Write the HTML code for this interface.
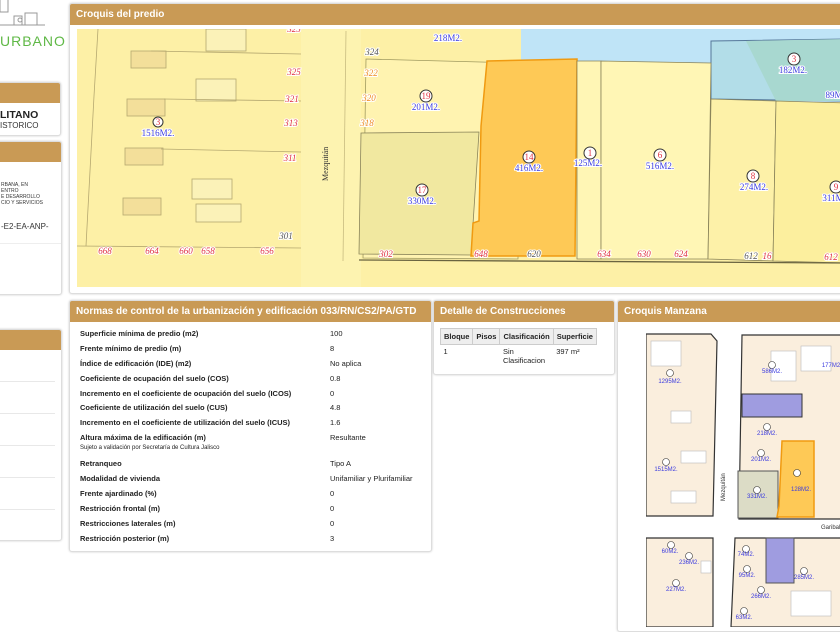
<!DOCTYPE html>
<html><head><meta charset="utf-8"><style>
body{margin:0;width:840px;height:630px;overflow:hidden;background:#fff;font-family:"Liberation Sans",sans-serif;position:relative}
.p{position:absolute;border:1px solid #ddd;border-radius:3px;background:#fff;box-shadow:0 0 2px #ccc;overflow:hidden}
.h{background:#c99a55;color:#fff;font-weight:bold;font-size:10px;height:21px;line-height:21px;padding-left:6px}
table.n{font-size:7.5px;border-collapse:collapse;margin:5px 0 0 10px;line-height:9px}
table.n td{padding:0;height:12.9px;vertical-align:top;padding-top:2px}
table.n td:first-child{font-weight:bold;width:250px;color:#222}
table.n td:last-child{color:#222}
.m text{font-family:"Liberation Serif",serif}
</style></head><body>

<!-- sidebar -->
<div style="position:absolute;left:0;top:0;width:62px;height:60px">
<svg width="62" height="32" style="position:absolute;top:0;left:0"><g fill="none" stroke="#999" stroke-width="1"><rect x="0" y="-2" width="8" height="14"/><rect x="14" y="16" width="8" height="9"/><rect x="25" y="13" width="12" height="12"/><line x1="0" y1="25" x2="45" y2="25"/><circle cx="20" cy="20" r="2"/></g></svg>
<div style="position:absolute;top:33px;left:0;color:#5fb846;font-size:14px;letter-spacing:1px">URBANO</div>
</div>
<div class="p" style="left:-4px;top:82px;width:64px;height:52px;border-left:none"><div class="h" style="height:20px"></div>
<div style="font-size:10.5px;font-weight:bold;color:#222;margin:6px 0 0 4px">LITANO</div><div style="font-size:8px;color:#333;margin-left:4px">ISTORICO</div></div>
<div class="p" style="left:-4px;top:141px;width:64px;height:152px"><div class="h" style="height:20px"></div>
<div style="font-size:5px;color:#333;margin:20px 0 0 4px;line-height:6px">RBANA, EN<br>ENTRO<br>E DESARROLLO<br>CIO Y SERVICIOS</div>
<div style="font-size:8px;color:#333;margin:16px 0 0 4px">-E2-EA-ANP-</div>
<div style="border-top:1px solid #eee;margin-top:12px"></div></div>
<div class="p" style="left:-4px;top:329px;width:64px;height:210px"><div class="h" style="height:20px"></div>
<div style="border-top:1px solid #e8e8e8;margin-top:31px;width:58px"></div><div style="border-top:1px solid #e8e8e8;margin-top:31px;width:58px"></div><div style="border-top:1px solid #e8e8e8;margin-top:31px;width:58px"></div><div style="border-top:1px solid #e8e8e8;margin-top:31px;width:58px"></div><div style="border-top:1px solid #e8e8e8;margin-top:31px;width:58px"></div></div>

<!-- croquis predio -->
<div class="p" style="left:69px;top:3px;width:780px;height:289px">
<div class="h">Croquis del predio</div>
<svg class="m" width="770" height="258" style="position:absolute;left:7px;top:25px" viewBox="76 28 770 258">
<rect x="76" y="28" width="770" height="258" fill="#fdf0a6"/>
<g stroke="#b5a870" stroke-width="0.8" fill="none">
<polyline points="97,28 93,95 85,245"/><polyline points="76,245 300,247"/>
<rect x="205" y="28" width="40" height="22" fill="#fbf2b8"/><rect x="130" y="50" width="35" height="17" fill="#f3df9a"/><rect x="195" y="78" width="40" height="22" fill="#fbf2b8"/><rect x="126" y="98" width="38" height="17" fill="#f3df9a"/><rect x="124" y="147" width="38" height="17" fill="#f3df9a"/><rect x="191" y="178" width="40" height="20" fill="#fbf2b8"/><rect x="122" y="197" width="38" height="17" fill="#f3df9a"/><rect x="195" y="203" width="45" height="18" fill="#fbf2b8"/>
<line x1="150" y1="50" x2="300" y2="53"/><line x1="163" y1="98" x2="300" y2="100"/><line x1="160" y1="148" x2="300" y2="151"/>
</g>
<rect x="300" y="28" width="60" height="258" fill="#fdf3b0"/>
<rect x="520" y="28" width="326" height="73" fill="#bfe4f7"/>
<polygon points="710,40 846,38 846,100 710,98" fill="#b2dde8" stroke="#557799" stroke-width="1"/>
<polygon points="745,40 846,38 846,100 775,100" fill="#a8d8d0"/>
<polygon points="365,58 518,62 517,258 362,257" fill="#fff3b0" stroke="#a09a60" stroke-width="0.8"/>
<polygon points="360,132 478,131 470,254 358,253" fill="#f1e8a0" stroke="#8a845a" stroke-width="0.8"/>
<polygon points="486,60 576,58 574,255 470,255 472,222 478,220 480,125" fill="#fec956" stroke="#f09a10" stroke-width="1.5"/>
<polygon points="576,60 600,60 600,258 576,258" fill="#fff6b5" stroke="#8a845a" stroke-width="0.8"/>
<polygon points="600,60 710,62 707,258 600,258" fill="#fff6b5" stroke="#8a845a" stroke-width="0.8"/>
<polygon points="710,98 775,100 772,260 707,258" fill="#fdf1a8" stroke="#8a845a" stroke-width="0.8"/>
<polygon points="775,100 846,102 846,262 772,260" fill="#fcef9e" stroke="#8a845a" stroke-width="0.8"/>
<line x1="358" y1="259" x2="846" y2="262" stroke="#6a6440" stroke-width="1.3"/>
<line x1="345" y1="30" x2="342" y2="260" stroke="#c8bc80" stroke-width="0.8"/>
<g font-size="9" font-style="italic" text-anchor="middle" fill="#e03040" stroke="#fff" stroke-width="2" paint-order="stroke">
<text x="104" y="253">668</text><text x="151" y="253">664</text><text x="185" y="253">660</text><text x="207" y="253">658</text><text x="266" y="253">656</text><text x="293" y="31">325</text><text x="293" y="74">325</text><text x="291" y="101">321</text><text x="290" y="125">313</text><text x="289" y="160">311</text>
<text x="370" y="75" fill="#f08a20">322</text><text x="368" y="100" fill="#f08a20">320</text><text x="366" y="125" fill="#f08a20">318</text><text x="385" y="256">302</text><text x="480" y="256">648</text>
<text x="603" y="256">634</text><text x="643" y="256">630</text><text x="680" y="256">624</text><text x="750" y="258" fill="#555">612</text><text x="766" y="258">16</text><text x="830" y="259">612</text>
<text x="371" y="54" fill="#555">324</text><text x="533" y="256" fill="#555">620</text><text x="285" y="238" fill="#555">301</text></g>
<g font-size="9" text-anchor="middle" fill="#3b3bdf" stroke="#fff" stroke-width="2" paint-order="stroke">
<text x="157" y="135">1516M2.</text><text x="447" y="40">218M2.</text><text x="425" y="109">201M2.</text><text x="421" y="203">330M2.</text><text x="528" y="170">416M2.</text><text x="587" y="165">125M2.</text><text x="659" y="168">516M2.</text><text x="753" y="189">274M2.</text><text x="792" y="72">182M2.</text><text x="833" y="97">89M</text><text x="832" y="200">311M</text></g>
<g fill="#fff" stroke="#333" stroke-width="1"><circle cx="157" cy="121" r="5"/><circle cx="425" cy="95" r="6"/><circle cx="421" cy="189" r="6"/><circle cx="528" cy="156" r="6"/><circle cx="589" cy="152" r="6"/><circle cx="659" cy="154" r="6"/><circle cx="752" cy="175" r="6"/><circle cx="793" cy="58" r="6"/><circle cx="835" cy="186" r="6"/></g>
<g font-size="9" text-anchor="middle" fill="#e03040"><text x="157" y="124">3</text><text x="425" y="98">19</text><text x="421" y="192">17</text><text x="528" y="159">14</text><text x="589" y="155">1</text><text x="659" y="157">6</text><text x="752" y="178">8</text><text x="793" y="61">3</text><text x="835" y="189">9</text></g>
<text x="0" y="0" font-size="8" fill="#333" transform="translate(327,180) rotate(-90)">Mezquitán</text>
</svg>
</div>

<!-- normas -->
<div class="p" style="left:69px;top:300px;width:361px;height:250px">
<div class="h">Normas de control de la urbanización y edificación 033/RN/CS2/PA/GTD</div>
<table class="n">
<tr><td>Superficie mínima de predio (m2)</td><td>100</td></tr>
<tr><td>Frente mínimo de predio (m)</td><td>8</td></tr>
<tr><td>Índice de edificación (IDE) (m2)</td><td>No aplica</td></tr>
<tr><td>Coeficiente de ocupación del suelo (COS)</td><td>0.8</td></tr>
<tr><td>Incremento en el coeficiente de ocupación del suelo (ICOS)</td><td>0</td></tr>
<tr><td>Coeficiente de utilización del suelo (CUS)</td><td>4.8</td></tr>
<tr><td>Incremento en el coeficiente de utilización del suelo (ICUS)</td><td>1.6</td></tr>
<tr><td style="height:24px">Altura máxima de la edificación (m)<br><span style="font-weight:normal;font-size:6px">Sujeto a validación por Secretaría de Cultura Jalisco</span></td><td>Resultante</td></tr>
<tr><td>Retranqueo</td><td>Tipo A</td></tr>
<tr><td>Modalidad de vivienda</td><td>Unifamiliar y Plurifamiliar</td></tr>
<tr><td>Frente ajardinado (%)</td><td>0</td></tr>
<tr><td>Restricción frontal (m)</td><td>0</td></tr>
<tr><td>Restricciones laterales (m)</td><td>0</td></tr>
<tr><td>Restricción posterior (m)</td><td>3</td></tr>
</table></div>

<!-- detalle -->
<div class="p" style="left:433px;top:300px;width:180px;height:73px">
<div class="h">Detalle de Construcciones</div>
<table style="font-size:7.5px;border-collapse:collapse;margin:6px 0 0 6px;color:#222">
<tr style="font-weight:bold;background:#eee"><td style="border:1px solid #ccc;padding:3px 3px">Bloque</td><td style="border:1px solid #ccc;padding:3px 3px">Pisos</td><td style="border:1px solid #ccc;padding:3px 3px">Clasificación</td><td style="border:1px solid #ccc;padding:3px 3px">Superficie</td></tr>
<tr style="vertical-align:top"><td style="padding:2px 3px">1</td><td></td><td style="padding:2px 3px">Sin<br>Clasificacion</td><td style="padding:2px 3px">397 m²</td></tr></table></div>

<!-- manzana -->
<div class="p" style="left:617px;top:300px;width:230px;height:330px">
<div class="h">Croquis Manzana</div>
<svg width="200" height="296" style="position:absolute;left:28px;top:30px" viewBox="645 330 200 296">
<rect x="645" y="330" width="200" height="296" fill="#fff"/>
<g stroke="#333" stroke-width="1.2" fill="#faeedd">
<polygon points="645,333 710,333 716,340 712,515 645,515"/>
<polygon points="741,334 840,334 840,518 738,518"/>
<polygon points="645,537 712,537 712,626 645,626"/>
<polygon points="734,537 840,537 840,626 730,626"/></g>
<g stroke="#bbb" stroke-width="0.6" fill="#fff"><rect x="650" y="340" width="30" height="25"/><rect x="670" y="410" width="20" height="12"/><rect x="680" y="450" width="25" height="12"/><rect x="670" y="490" width="25" height="12"/><rect x="770" y="350" width="25" height="30"/><rect x="800" y="345" width="30" height="25"/><rect x="700" y="560" width="10" height="12"/><rect x="790" y="590" width="40" height="25"/></g>
<rect x="741" y="393" width="60" height="23" fill="#9f9ce0" stroke="#333"/>
<rect x="737" y="470" width="40" height="47" fill="#dcdcc6" stroke="#555"/>
<polygon points="781,440 813,440 813,516 776,516 778,505" fill="#fec956" stroke="#f09a10" stroke-width="1.5"/>
<rect x="765" y="537" width="28" height="45" fill="#9f9ce0" stroke="#555"/>
<g fill="#fff" stroke="#333" stroke-width="0.6"><circle cx="669" cy="372" r="3.5"/><circle cx="665" cy="461" r="3.5"/><circle cx="771" cy="364" r="3.5"/><circle cx="766" cy="426" r="3.5"/><circle cx="760" cy="452" r="3.5"/><circle cx="756" cy="489" r="3.5"/><circle cx="796" cy="472" r="3.5"/><circle cx="670" cy="544" r="3.5"/><circle cx="688" cy="555" r="3.5"/><circle cx="675" cy="582" r="3.5"/><circle cx="745" cy="548" r="3.5"/><circle cx="746" cy="568" r="3.5"/><circle cx="803" cy="570" r="3.5"/><circle cx="760" cy="589" r="3.5"/><circle cx="743" cy="610" r="3.5"/></g>
<g font-size="6" fill="#3b3bdf" text-anchor="middle"><text x="669" y="382">1295M2.</text><text x="665" y="470">1515M2.</text><text x="771" y="372">586M2.</text><text x="766" y="434">218M2.</text><text x="760" y="460">201M2.</text><text x="756" y="497">331M2.</text><text x="800" y="490">128M2.</text><text x="669" y="552">60M2.</text><text x="688" y="563">236M2.</text><text x="675" y="590">227M2.</text><text x="745" y="555">74M2.</text><text x="746" y="576">95M2.</text><text x="803" y="578">285M2.</text><text x="760" y="597">266M2.</text><text x="743" y="618">63M2.</text><text x="830" y="366">177M2</text></g>
<text x="820" y="528" font-size="6" fill="#333">Garibal</text>
<text font-size="6" fill="#333" transform="translate(724,500) rotate(-90)">Mezquitán</text>
</svg></div>
</body></html>
